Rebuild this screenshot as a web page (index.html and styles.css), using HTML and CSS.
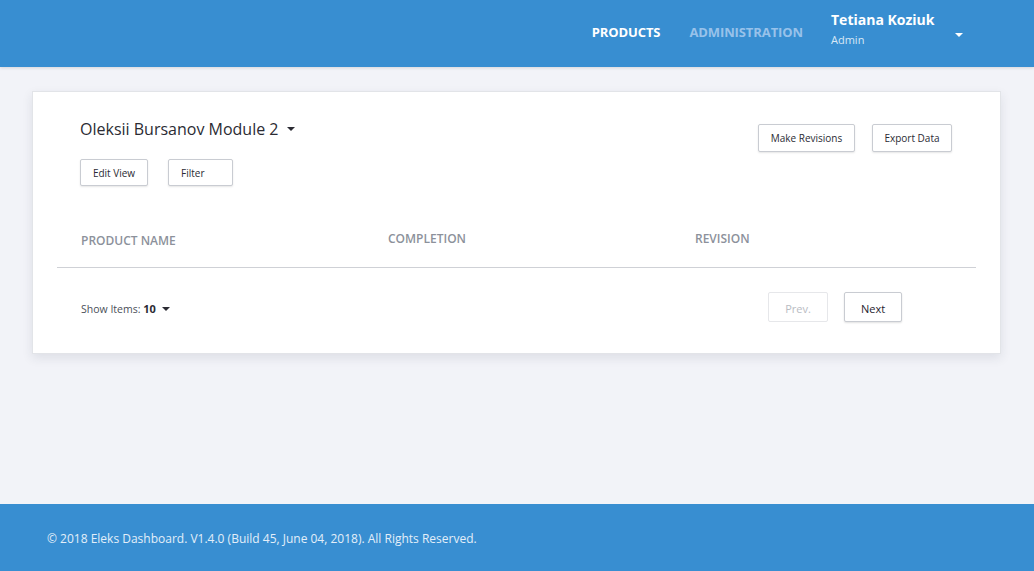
FILE: index.html
```html
<!DOCTYPE html>
<html>
<head>
<meta charset="utf-8">
<link rel="stylesheet" href="styles.css">
</head>
<body>
<div class="page">
  <header class="topbar">
    <nav class="nav">
      <a class="nav-link active">PRODUCTS</a>
      <a class="nav-link">ADMINISTRATION</a>
    </nav>
    <div class="user">
      <div class="user-info">
        <div class="user-name">Tetiana Koziuk</div>
        <div class="user-role">Admin</div>
      </div>
      <span class="caret caret-white"></span>
    </div>
  </header>

  <main class="main">
    <section class="card">
      <div class="card-top">
        <div class="card-left">
          <h1 class="title">Oleksii Bursanov Module 2 <span class="caret caret-dark"></span></h1>
          <div class="btn-row">
            <button class="btn btn-edit">Edit View</button>
            <button class="btn btn-filter">Filter</button>
          </div>
        </div>
        <div class="card-right">
          <button class="btn btn-make">Make Revisions</button>
          <button class="btn btn-export">Export Data</button>
        </div>
      </div>
      <div class="table-head">
        <div class="th th-name">PRODUCT NAME</div>
        <div class="th">COMPLETION</div>
        <div class="th">REVISION</div>
      </div>
      <div class="table-foot">
        <div class="show-items">Show Items: <b>10</b> <span class="caret caret-dark small"></span></div>
        <div class="pager">
          <button class="pbtn disabled">Prev.</button>
          <button class="pbtn">Next</button>
        </div>
      </div>
    </section>
  </main>

  <footer class="footer">
    © 2018 Eleks Dashboard. V1.4.0 (Build 45, June 04, 2018). All Rights Reserved.
  </footer>
</div>
</body>
</html>
```

FILE: styles.css
```css
* { box-sizing: border-box; }
html, body { margin: 0; padding: 0; }
body {
  font-family: "Open Sans", "Noto Sans", sans-serif;
  background: #f2f3f8;
  color: #2b2b33;
}
.page {
  display: flex;
  flex-direction: column;
  height: 571px;
}
.topbar {
  height: 67px;
  background: #388ed1;
  display: flex;
  justify-content: flex-end;
  align-items: flex-start;
  padding-right: 71px;
  box-shadow: 0 1px 3px rgba(0,0,0,0.12);
}
.nav { display: flex; gap: 29px; margin-right: 28px; padding-top: 23px; }
.nav-link {
  font-size: 13px;
  font-weight: 700;
  line-height: 18px;
  color: #98c2ea;
  letter-spacing: -0.1px;
}
.nav-link.active { color: #ffffff; }
.user { display: flex; align-items: flex-start; padding-top: 11px; }
.user-info { display: flex; flex-direction: column; width: 120px; }
.user-name { font-size: 14px; font-weight: 700; color: #fff; line-height: 18px; }
.user-role { font-size: 11px; color: #d9e8f6; line-height: 15px; margin-top: 3px; }
.caret {
  display: inline-block;
  width: 0; height: 0;
  border-left: 4px solid transparent;
  border-right: 4px solid transparent;
  border-top: 4px solid #fff;
}
.caret-white { margin-top: 22px; margin-left: 4px; }
.caret-dark { border-top-color: #2b2b33; vertical-align: middle; margin-left: 4px; position: relative; top: -2px; }
.main { flex: 1; padding: 24px 33px 0 32px; }
.card {
  background: #fff;
  border: 1px solid #e2e4e8;
  box-shadow: 0 4px 10px rgba(40,50,70,0.10);
  height: 263px;
  padding: 0 24px;
}
.card-top {
  display: flex;
  justify-content: space-between;
  padding: 24px 24px 0 23px;
  height: 127px;
}
.title {
  font-size: 16px;
  font-weight: 400;
  margin: 2px 0 0 0;
  line-height: 22px;
  color: #2b2b33;
}
.btn-row { display: flex; gap: 20px; margin-top: 19px; }
.btn {
  background: #fff;
  border: 1px solid #c9ccd2;
  border-radius: 2px;
  box-shadow: 0 1px 2px rgba(0,0,0,0.10);
  font-family: "Open Sans", "Noto Sans", sans-serif;
  font-size: 10px;
  color: #2b2b33;
  height: 27px;
  padding: 0;
}
.btn-edit { width: 68px; }
.btn-filter { width: 65px; text-align: left; padding-left: 12px; }
.card-right { display: flex; gap: 17px; padding-top: 8px; }
.btn-make { width: 97px; height: 28px; }
.btn-export { width: 80px; height: 28px; }
.table-head {
  display: grid;
  grid-template-columns: 307px 307px 1fr;
  padding-left: 24px;
  height: 49px;
  border-bottom: 1px solid #cfd1d6;
  align-items: start;
}
.th { font-size: 12px; font-weight: 600; color: #8c919b; line-height: 16px; padding-top: 12px; }
.th-name { padding-top: 14px; }
.table-foot {
  display: flex;
  justify-content: space-between;
  align-items: center;
  padding: 24px 74px 0 24px;
}
.show-items { font-size: 10.5px; color: #4a4f59; padding-top: 2px; }
.show-items b { color: #2b2b33; font-weight: 700; font-size: 11px; }
.caret.small { margin-left: 3px; top: -1px; }
.pager { display: flex; gap: 16px; }
.pbtn {
  font-family: "Open Sans", "Noto Sans", sans-serif;
  font-size: 11px;
  height: 30px;
  background: #fff;
  border: 1px solid #c9ccd2;
  border-radius: 2px;
  box-shadow: 0 1px 2px rgba(0,0,0,0.12);
  color: #1f2430;
  width: 58px;
  padding: 0;
  padding-top: 2px;
}
.pbtn.disabled { color: #b9bcc3; border-color: #e6e7ea; box-shadow: none; width: 60px; }
.footer {
  height: 67px;
  background: #388ed1;
  color: #e3eef9;
  font-size: 12px;
  display: flex;
  align-items: center;
  padding-left: 47px;
  padding-top: 1px;
}
```
